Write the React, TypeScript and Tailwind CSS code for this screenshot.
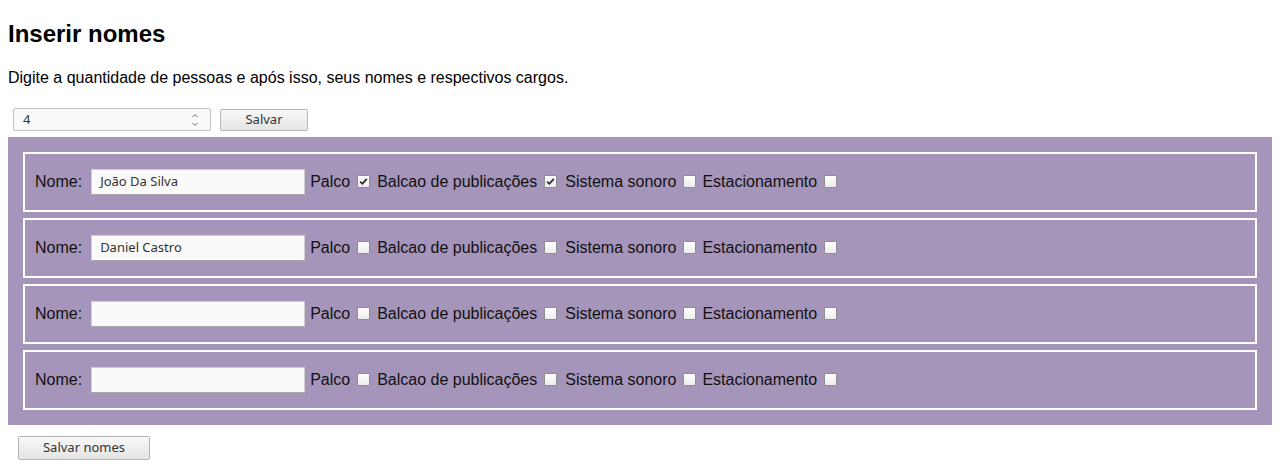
import React from "react";

const Box = ({ checked }: { checked?: boolean }) => (
  <span className="mb-[2px] ml-[7px] inline-flex h-[13px] w-[13px] shrink-0 items-center justify-center rounded-[1px] border border-[#8e8e8e] bg-gradient-to-b from-[#ffffff] to-[#ececec]">
    {checked && (
      <svg width="9" height="9" viewBox="0 0 9 9">
        <path d="M1.2 4.6 L3.4 6.8 L7.8 1.8" fill="none" stroke="#2e2e2e" strokeWidth="1.8" />
      </svg>
    )}
  </span>
);

const Row = ({ name, checks }: { name: string; checks: boolean[] }) => (
  <div className="flex h-[60px] items-center border-2 border-white pl-[10px] text-[16px] text-[#111]">
    <span>Nome:</span>
    <div className="ml-[9px] flex h-[26px] w-[214px] items-center border border-[#cfcfcf] border-b-[#a8a8a8] bg-[#fafafa] pl-[8px] font-['Noto_Sans',sans-serif] text-[13px] text-[#333]">
      {name}
    </div>
    <span className="ml-[5px]">Palco</span>
    <Box checked={checks[0]} />
    <span className="ml-[7px]">Balcao de publicações</span>
    <Box checked={checks[1]} />
    <span className="ml-[8px]">Sistema sonoro</span>
    <Box checked={checks[2]} />
    <span className="ml-[6px]">Estacionamento</span>
    <Box checked={checks[3]} />
  </div>
);

export default function App() {
  return (
    <div className="min-h-[476px] bg-white px-[8px] font-['Liberation_Sans',Arial,sans-serif] text-black">
      <h2 className="pt-[20px] text-[24px] font-bold leading-[28px]">Inserir nomes</h2>
      <p className="mt-[20px] text-[16px] leading-[19px]">
        Digite a quantidade de pessoas e após isso, seus nomes e respectivos cargos.
      </p>
      <div className="mt-[21px] flex h-[23px] items-center font-['Noto_Sans',sans-serif] text-[13px] text-[#333]">
        <div className="ml-[5px] flex h-[23px] w-[198px] items-center justify-between rounded-[2px] border border-[#c4c4c4] bg-[#fafafa] pl-[9px] pr-[11px]">
          <span>4</span>
          <svg width="8" height="16" viewBox="0 0 8 16">
            <path d="M1.5 5 L4 2.5 L6.5 5" fill="none" stroke="#666" strokeWidth="1" />
            <path d="M1.5 11 L4 13.5 L6.5 11" fill="none" stroke="#666" strokeWidth="1" />
          </svg>
        </div>
        <div className="ml-[9px] flex h-[22px] w-[88px] items-center justify-center rounded-[2px] border border-[#b4b4b4] bg-gradient-to-b from-[#f8f8f8] to-[#e4e4e4]">
          Salvar
        </div>
      </div>
      <div className="mt-[6px] flex flex-col gap-[6px] bg-[#a695bb] p-[15px]">
        <Row name="João Da Silva" checks={[true, true, false, false]} />
        <Row name="Daniel Castro" checks={[false, false, false, false]} />
        <Row name="" checks={[false, false, false, false]} />
        <Row name="" checks={[false, false, false, false]} />
      </div>
      <div className="ml-[10px] mt-[11px] flex h-[24px] w-[132px] items-center justify-center rounded-[2px] border border-[#b4b4b4] bg-gradient-to-b from-[#f8f8f8] to-[#e4e4e4] font-['Noto_Sans',sans-serif] text-[13px] text-[#333]">
        Salvar nomes
      </div>
    </div>
  );
}
